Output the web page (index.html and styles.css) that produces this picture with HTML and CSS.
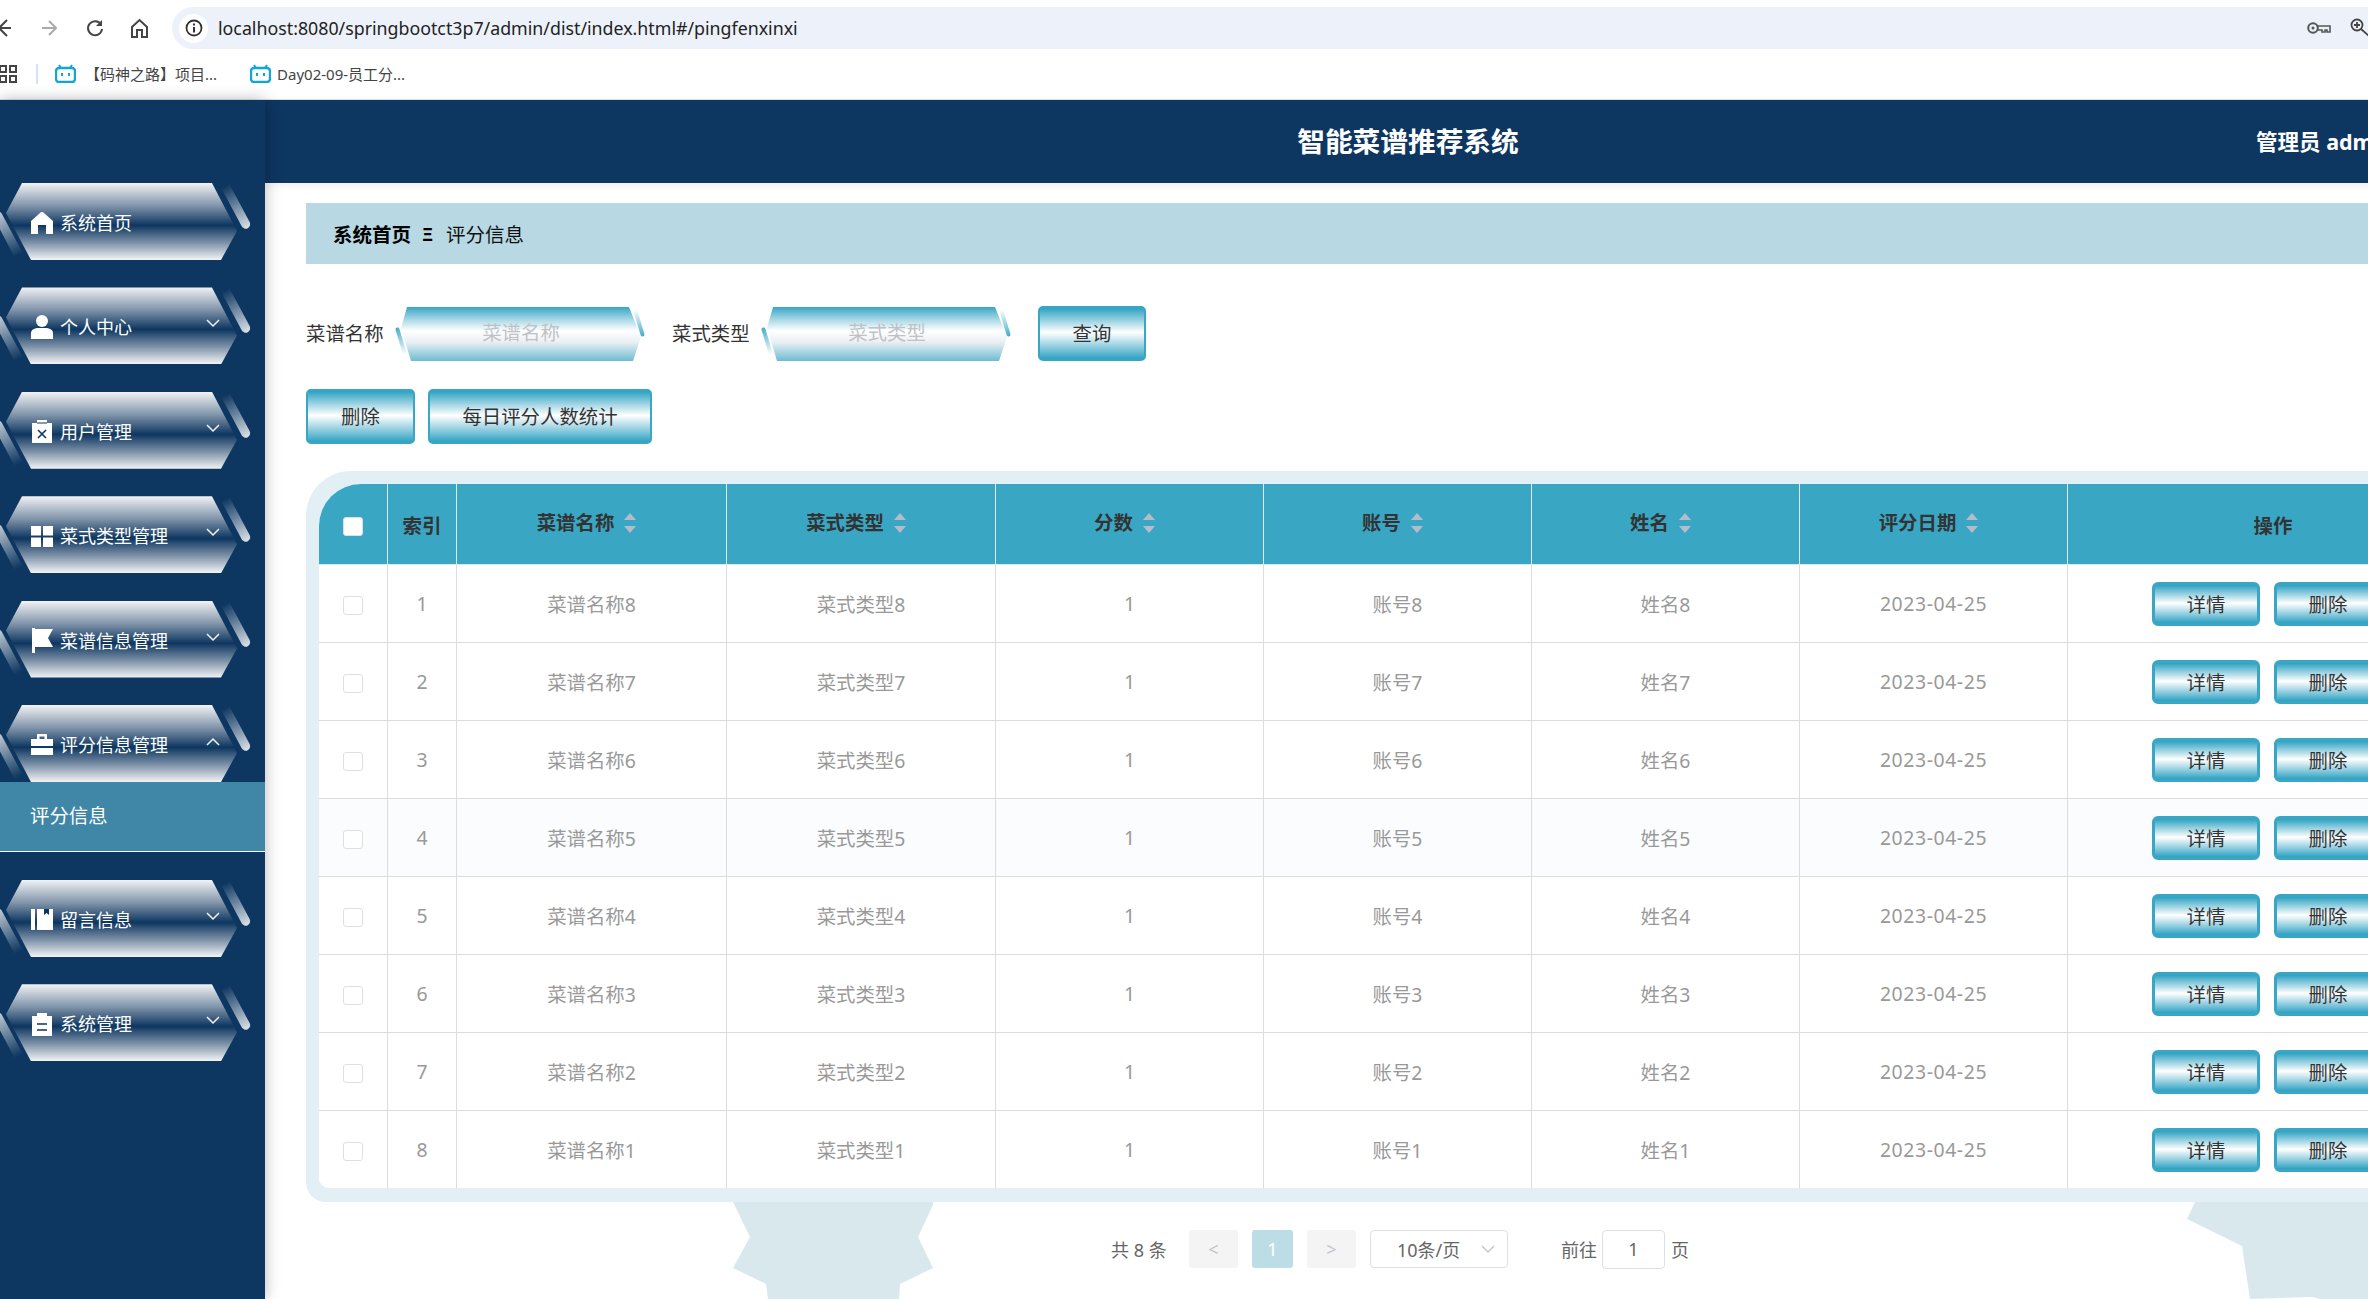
FILE: index.html
```html
<!DOCTYPE html>
<html>
<head>
  <meta charset="utf-8">
  <title>智能菜谱推荐系统</title>
  <link rel="stylesheet" href="styles.css">
</head>
<body>
  <header class="browser">
    <div class="toolbar">
      <svg class="tool-icon back" width="16" height="20" viewBox="0 0 16 20"><path d="M10 2 2 10l8 8M2 10h12" fill="none" stroke="#444" stroke-width="2"/></svg>
      <svg class="tool-icon forward" width="16" height="20" viewBox="0 0 16 20"><path d="M8 3l7 7-7 7M15 10H1" fill="none" stroke="#aaa" stroke-width="2"/></svg>
      <svg class="tool-icon reload" width="18" height="20" viewBox="0 0 18 20"><path d="M15 6.500A7 7 0 1 0 16 11" fill="none" stroke="#444" stroke-width="2"/><path d="M16 2v6h-6z" fill="#444"/></svg>
      <svg class="tool-icon home" width="17" height="20" viewBox="0 0 17 20"><path d="M1 9l7.500-7L16 9v10h-5v-7H6v7H1z" fill="none" stroke="#444" stroke-width="2"/></svg>
      <div class="address">
        <span class="site-info"><svg width="18" height="18" viewBox="0 0 18 18"><circle cx="9" cy="9" r="7.500" fill="none" stroke="#333" stroke-width="1.800"/><path d="M9 8v5.500M9 4.500v2" stroke="#333" stroke-width="2"/></svg></span>
        <span class="url">localhost:8080/springbootct3p7/admin/dist/index.html#/pingfenxinxi</span>
        <svg class="key" width="24" height="14" viewBox="0 0 24 14"><circle cx="6" cy="7" r="4.800" fill="none" stroke="#555" stroke-width="2"/><circle cx="6" cy="7" r="1.500" fill="#555"/><path d="M11 5h12v6h-3V9h-2v2h-3V9h-4" fill="none" stroke="#555" stroke-width="1.600"/></svg>
        <svg class="magnifier" width="20" height="20" viewBox="0 0 20 20"><circle cx="7" cy="7" r="5.500" fill="none" stroke="#444" stroke-width="1.800"/><path d="M11 11l8 7M4 7h6M7 4v6" fill="none" stroke="#444" stroke-width="1.800"/></svg>
      </div>
    </div>
    <div class="bookmarks">
      <svg class="apps" width="18" height="18" viewBox="0 0 18 18"><path d="M1 1h6v6H1zM11 1h6v6h-6zM1 11h6v6H1zM11 11h6v6h-6z" fill="none" stroke="#444" stroke-width="2"/></svg>
      <span class="bm-sep"></span>
      <a class="bookmark bm-first">
        <svg width="21" height="19" viewBox="0 0 21 19"><path d="M6 4 4 1M15 4l2-3" stroke="#12a5d8" stroke-width="2"/><rect x="1" y="4" width="19" height="14" rx="3" fill="none" stroke="#12a5d8" stroke-width="2.400"/><path d="M7 9v3M14 9v3" stroke="#12a5d8" stroke-width="2"/></svg>
        <span>【码神之路】项目...</span>
      </a>
      <a class="bookmark bm-second">
        <svg width="21" height="19" viewBox="0 0 21 19"><path d="M6 4 4 1M15 4l2-3" stroke="#12a5d8" stroke-width="2"/><rect x="1" y="4" width="19" height="14" rx="3" fill="none" stroke="#12a5d8" stroke-width="2.400"/><path d="M7 9v3M14 9v3" stroke="#12a5d8" stroke-width="2"/></svg>
        <span>Day02-09-员工分...</span>
      </a>
    </div>
  </header>

  <svg class="decor" width="2368" height="97" viewBox="0 1202 2368 97">
    <polygon points="733,1202 933,1202 933,1205 918,1237 933,1268 900,1284 899,1299 768,1299 766,1284 733,1268 750,1237"/>
    <polygon points="2195,1202 2368,1202 2368,1299 2320,1299 2313,1297 2250,1299 2242,1246 2187,1219"/>
  </svg>

  <div class="app">
    <aside class="sidebar">
      <div class="menu-item">
        <span class="hex"></span><span class="slash-left"></span><span class="slash-right"></span>
        <svg class="menu-icon" width="22" height="22" viewBox="0 0 22 22"><path d="M11 0q1 0 2 1l9 8v13h-7v-9H7v9H0V9l9-8q1-1 2-1z" fill="#fff"/></svg>
        <span class="menu-text">系统首页</span>
      </div>
      <div class="menu-item">
        <span class="hex"></span><span class="slash-left"></span><span class="slash-right"></span>
        <svg class="menu-icon" width="22" height="24" viewBox="0 0 22 24"><circle cx="11" cy="6" r="6" fill="#fff"/><path d="M0 24v-6q0-4 6-5h10q6 1 6 5v6z" fill="#fff"/></svg>
        <span class="menu-text">个人中心</span>
        <svg class="chevron" width="14" height="9" viewBox="0 0 14 9"><path d="M1 1l6 6 6-6" fill="none" stroke="#f0f2f6" stroke-width="1.500"/></svg>
      </div>
      <div class="menu-item">
        <span class="hex"></span><span class="slash-left"></span><span class="slash-right"></span>
        <svg class="menu-icon" width="22" height="23" viewBox="0 0 22 23"><path d="M1 3h5V0h10v3h5v20H1z" fill="#fff"/><path d="M6 3h10" stroke="#0d3660" stroke-width="1"/><path d="M7 10l8 8M15 10l-8 8" stroke="#0d3660" stroke-width="1.600"/></svg>
        <span class="menu-text">用户管理</span>
        <svg class="chevron" width="14" height="9" viewBox="0 0 14 9"><path d="M1 1l6 6 6-6" fill="none" stroke="#f0f2f6" stroke-width="1.500"/></svg>
      </div>
      <div class="menu-item">
        <span class="hex"></span><span class="slash-left"></span><span class="slash-right"></span>
        <svg class="menu-icon" width="22" height="21" viewBox="0 0 22 21"><path d="M0 0h10v9.500H0zM12 0h10v9.500H12zM0 11.500h10V21H0zM12 11.500h10V21H12z" fill="#fff"/></svg>
        <span class="menu-text">菜式类型管理</span>
        <svg class="chevron" width="14" height="9" viewBox="0 0 14 9"><path d="M1 1l6 6 6-6" fill="none" stroke="#f0f2f6" stroke-width="1.500"/></svg>
      </div>
      <div class="menu-item">
        <span class="hex"></span><span class="slash-left"></span><span class="slash-right"></span>
        <svg class="menu-icon" width="22" height="25" viewBox="0 0 22 25"><path d="M1 0h3v25H1zM4 1h18l-5 9 5 9H4z" fill="#fff"/></svg>
        <span class="menu-text">菜谱信息管理</span>
        <svg class="chevron" width="14" height="9" viewBox="0 0 14 9"><path d="M1 1l6 6 6-6" fill="none" stroke="#f0f2f6" stroke-width="1.500"/></svg>
      </div>
      <div class="menu-item">
        <span class="hex"></span><span class="slash-left"></span><span class="slash-right"></span>
        <svg class="menu-icon" width="22" height="21" viewBox="0 0 22 21"><path d="M6 5V0h10v5h6v7H0V5zM8.500 5h5V2.500h-5zM0 14h22v7H0z" fill="#fff" fill-rule="evenodd"/></svg>
        <span class="menu-text">评分信息管理</span>
        <svg class="chevron" width="14" height="9" viewBox="0 0 14 9"><path d="M1 8l6-6 6 6" fill="none" stroke="#f0f2f6" stroke-width="1.500"/></svg>
      </div>
      <div class="sub-item">评分信息</div>
      <div class="menu-item">
        <span class="hex"></span><span class="slash-left"></span><span class="slash-right"></span>
        <svg class="menu-icon" width="22" height="21" viewBox="0 0 22 21"><path d="M0 0h4v21H0zM6 0h16v21H6z" fill="#fff"/><path d="M13 0h5v6l-2.500-2L13 6z" fill="#0d3660"/></svg>
        <span class="menu-text">留言信息</span>
        <svg class="chevron" width="14" height="9" viewBox="0 0 14 9"><path d="M1 1l6 6 6-6" fill="none" stroke="#f0f2f6" stroke-width="1.500"/></svg>
      </div>
      <div class="menu-item">
        <span class="hex"></span><span class="slash-left"></span><span class="slash-right"></span>
        <svg class="menu-icon" width="22" height="23" viewBox="0 0 22 23"><path d="M1 3h5V0h10v3h5v20H1z" fill="#fff"/><path d="M6 11h10M6 17h10" stroke="#0d3660" stroke-width="1.600"/></svg>
        <span class="menu-text">系统管理</span>
        <svg class="chevron" width="14" height="9" viewBox="0 0 14 9"><path d="M1 1l6 6 6-6" fill="none" stroke="#f0f2f6" stroke-width="1.500"/></svg>
      </div>
    </aside>

    <div class="main">
      <div class="topbar">
        <span></span>
        <h1 class="topbar-title">智能菜谱推荐系统</h1>
        <span class="topbar-user">管理员 admin</span>
      </div>

      <div class="content">
        <div class="breadcrumb">
          <b>系统首页</b><span class="crumb-sep">Ξ</span><span>评分信息</span>
        </div>

        <div class="search-row">
          <label class="search-label">菜谱名称</label>
          <div class="hex-input">
            <input type="text" placeholder="菜谱名称">
            <span class="input-slash-left"></span><span class="input-slash-right"></span>
          </div>
          <label class="search-label">菜式类型</label>
          <div class="hex-input">
            <input type="text" placeholder="菜式类型">
            <span class="input-slash-left"></span><span class="input-slash-right"></span>
          </div>
          <button class="btn btn-query">查询</button>
        </div>

        <div class="action-row">
          <button class="btn btn-del">删除</button>
          <button class="btn btn-stat">每日评分人数统计</button>
        </div>

        <div class="table-wrap">
          <div class="table-clip">
            <table class="data-table">
              <colgroup>
                <col class="col-check"><col class="col-index">
                <col class="col-270"><col class="col-269"><col class="col-268"><col class="col-268"><col class="col-268"><col class="col-268">
                <col class="col-ops">
              </colgroup>
              <thead>
                <tr>
                  <th class="th-low"><span class="check check-head"></span></th>
                  <th class="th-low">索引</th>
                  <th>菜谱名称<span class="sort"></span></th>
                  <th>菜式类型<span class="sort"></span></th>
                  <th>分数<span class="sort"></span></th>
                  <th>账号<span class="sort"></span></th>
                  <th>姓名<span class="sort"></span></th>
                  <th>评分日期<span class="sort"></span></th>
                  <th class="th-low">操作</th>
                </tr>
              </thead>
              <tbody>
                <tr>
                  <td><span class="check"></span></td><td>1</td><td>菜谱名称8</td><td>菜式类型8</td><td>1</td><td>账号8</td><td>姓名8</td><td class="date">2023-04-25</td>
                  <td><div class="ops"><button class="btn btn-row">详情</button><button class="btn btn-row">删除</button></div></td>
                </tr>
                <tr>
                  <td><span class="check"></span></td><td>2</td><td>菜谱名称7</td><td>菜式类型7</td><td>1</td><td>账号7</td><td>姓名7</td><td class="date">2023-04-25</td>
                  <td><div class="ops"><button class="btn btn-row">详情</button><button class="btn btn-row">删除</button></div></td>
                </tr>
                <tr>
                  <td><span class="check"></span></td><td>3</td><td>菜谱名称6</td><td>菜式类型6</td><td>1</td><td>账号6</td><td>姓名6</td><td class="date">2023-04-25</td>
                  <td><div class="ops"><button class="btn btn-row">详情</button><button class="btn btn-row">删除</button></div></td>
                </tr>
                <tr class="row-hover">
                  <td><span class="check"></span></td><td>4</td><td>菜谱名称5</td><td>菜式类型5</td><td>1</td><td>账号5</td><td>姓名5</td><td class="date">2023-04-25</td>
                  <td><div class="ops"><button class="btn btn-row">详情</button><button class="btn btn-row">删除</button></div></td>
                </tr>
                <tr>
                  <td><span class="check"></span></td><td>5</td><td>菜谱名称4</td><td>菜式类型4</td><td>1</td><td>账号4</td><td>姓名4</td><td class="date">2023-04-25</td>
                  <td><div class="ops"><button class="btn btn-row">详情</button><button class="btn btn-row">删除</button></div></td>
                </tr>
                <tr>
                  <td><span class="check"></span></td><td>6</td><td>菜谱名称3</td><td>菜式类型3</td><td>1</td><td>账号3</td><td>姓名3</td><td class="date">2023-04-25</td>
                  <td><div class="ops"><button class="btn btn-row">详情</button><button class="btn btn-row">删除</button></div></td>
                </tr>
                <tr>
                  <td><span class="check"></span></td><td>7</td><td>菜谱名称2</td><td>菜式类型2</td><td>1</td><td>账号2</td><td>姓名2</td><td class="date">2023-04-25</td>
                  <td><div class="ops"><button class="btn btn-row">详情</button><button class="btn btn-row">删除</button></div></td>
                </tr>
                <tr class="row-last">
                  <td><span class="check"></span></td><td>8</td><td>菜谱名称1</td><td>菜式类型1</td><td>1</td><td>账号1</td><td>姓名1</td><td class="date">2023-04-25</td>
                  <td><div class="ops"><button class="btn btn-row">详情</button><button class="btn btn-row">删除</button></div></td>
                </tr>
              </tbody>
            </table>
          </div>
        </div>

        <div class="pagination">
          <span class="page-total">共 8 条</span>
          <span class="page-btn page-prev">&lt;</span>
          <span class="page-btn page-now">1</span>
          <span class="page-btn page-next">&gt;</span>
          <span class="page-size">10条/页
            <svg width="14" height="8" viewBox="0 0 14 8"><path d="M1 1l6 6 6-6" fill="none" stroke="#c0c4cc" stroke-width="1.300"/></svg>
          </span>
          <span class="page-goto">前往</span>
          <span class="page-input">1</span>
          <span class="page-unit">页</span>
        </div>
      </div>
    </div>
  </div>
</body>
</html>
```

FILE: styles.css
```css
* {
  margin: 0;
  padding: 0;
  box-sizing: border-box;
  font-family: "Noto Sans", "Noto Sans CJK SC", sans-serif;
}

html, body {
  width: 2368px;
  height: 1299px;
  overflow: hidden;
  background: #fff;
}

body {
  position: relative;
}

/* browser chrome */
.browser {
  height: 100px;
  background: #fff;
  border-bottom: 1px solid #dfe1e5;
  overflow: hidden;
}

.toolbar {
  height: 56px;
  display: flex;
  align-items: center;
}

.tool-icon {
  flex: none;
}

.back { margin-left: -3px; }
.forward { margin-left: 28px; }
.reload { margin-left: 29px; }
.home { margin-left: 27px; }

.address {
  flex: 1;
  height: 42px;
  margin-left: 24px;
  margin-right: -40px;
  background: #edf2fa;
  border-radius: 21px;
  display: flex;
  align-items: center;
  padding-left: 7px;
  padding-right: 40px;
}

.site-info {
  width: 29px;
  height: 29px;
  border-radius: 50%;
  background: #fff;
  display: flex;
  align-items: center;
  justify-content: center;
}

.url {
  margin-left: 10px;
  font-size: 17.800px;
  color: #222;
  flex: 1;
}

.key { margin-right: 19px; }
.magnifier { margin-right: -2px; }

.bookmarks {
  height: 43px;
  display: flex;
  align-items: center;
  padding-bottom: 8px;
  font-size: 15px;
  color: #444;
}

.apps { margin-left: -1px; }

.bm-sep {
  width: 2px;
  height: 20px;
  margin-left: 19px;
  background: #d3e3fd;
}

.bookmark {
  display: flex;
  align-items: center;
  gap: 9px;
}

.bm-first { margin-left: 17px; }

.bm-second {
  margin-left: 33px;
  gap: 6px;
}

/* page */
.decor {
  position: absolute;
  left: 0;
  top: 1202px;
}

.decor polygon {
  fill: #d9e8ed;
}

.app {
  position: relative;
  display: flex;
  height: 1199px;
}

.sidebar {
  flex: none;
  position: relative;
  z-index: 2;
  width: 265px;
  padding-top: 83px;
  background: #0d3660;
  box-shadow: 0 0 14px rgba(0, 0, 0, .28);
}

.menu-item {
  position: relative;
  height: 77px;
  margin-bottom: 27.4px;
  display: flex;
  align-items: center;
  padding: 3px 0 0 31px;
  color: #fff;
  font-size: 18px;
}

.hex {
  position: absolute;
  inset: 0;
  background: linear-gradient(180deg, #f2f3f5 0%, #7f93a9 30%, #0d3660 55%, #7f93a9 78%, #f3f4f6 100%);
  clip-path: polygon(22px 0, 212px 0, 237px 48px, 221px 77px, 31px 77px, 6px 30px);
}

.slash-left,
.slash-right {
  position: absolute;
  width: 9px;
  height: 48px;
  transform: rotate(-28deg);
}

.slash-left {
  left: 3px;
  top: 27px;
  background: linear-gradient(180deg, rgba(255, 255, 255, .75), rgba(255, 255, 255, 0));
  border-radius: 4px 4px 0 0;
}

.slash-right {
  left: 232px;
  top: 0;
  background: linear-gradient(180deg, rgba(255, 255, 255, 0), rgba(255, 255, 255, .85));
  border-radius: 0 0 5px 5px;
}

.menu-icon {
  position: relative;
  flex: none;
}

.menu-text {
  position: relative;
  margin-left: 7px;
  line-height: 22px;
}

.chevron {
  position: absolute;
  left: 206px;
  top: 32px;
}

.sub-item {
  height: 70px;
  margin-top: -27.4px;
  margin-bottom: 28px;
  padding-left: 30px;
  line-height: 68px;
  background: #4086a6;
  border-bottom: 1.500px solid #fff;
  color: #fff;
  font-size: 19.400px;
}

.main {
  flex: none;
  width: 2286px;
}

.topbar {
  height: 83px;
  padding-bottom: 3px;
  display: grid;
  grid-template-columns: 1fr auto 1fr;
  align-items: center;
  background: #0d3660;
  color: #fff;
  box-shadow: 0 2px 8px rgba(13, 54, 96, .08);
}

.topbar-title {
  font-size: 27.700px;
  font-weight: 700;
}

.topbar-user {
  justify-self: end;
  padding-right: 157px;
  font-size: 21.500px;
  font-weight: 700;
}

.content {
  padding: 20px 0 0 41px;
}

.breadcrumb {
  height: 61px;
  display: flex;
  align-items: center;
  padding-left: 27px;
  background: #b8d8e3;
  font-size: 19.500px;
  color: #111;
}

.breadcrumb b {
  font-weight: 700;
  color: #000;
}

.crumb-sep {
  width: 12px;
  margin: 0 12px 0 11px;
  font-size: 18px;
  font-weight: 700;
  color: #000;
}

.search-row {
  margin-top: 42px;
  display: flex;
  align-items: center;
  height: 55px;
}

.search-label {
  width: 78px;
  margin-right: 14px;
  padding-bottom: 2px;
  font-size: 19.400px;
  color: #333;
  white-space: nowrap;
}

.hex-input {
  position: relative;
  width: 246px;
  height: 55px;
  margin-right: 28px;
}

.hex-input input {
  display: block;
  width: 100%;
  height: 100%;
  border: 0;
  outline: none;
  padding-bottom: 2px;
  text-align: center;
  font-size: 19.400px;
  background: linear-gradient(180deg, #2ea2c3 0%, #a6d6e4 24%, #fff 45%, #e9eff3 66%, #6dbcd3 100%);
  clip-path: polygon(9px 1px, 231px 1px, 243px 31px, 235px 55px, 13px 55px, 3px 22px);
}

.hex-input input::placeholder {
  color: #c0c1c5;
  opacity: 1;
}

.input-slash-left,
.input-slash-right {
  position: absolute;
  width: 4px;
  height: 28px;
  transform: rotate(-17deg);
}

.input-slash-left {
  left: 1px;
  top: 21px;
  background: linear-gradient(180deg, #45abc8, rgba(69, 171, 200, 0));
  border-radius: 2px 2px 0 0;
}

.input-slash-right {
  left: 239px;
  top: 3px;
  background: linear-gradient(180deg, rgba(69, 171, 200, 0), #45abc8);
  border-radius: 0 0 2px 2px;
}

.btn {
  height: 55px;
  padding-bottom: 2px;
  border: 2px solid #39a6c4;
  border-radius: 5px;
  background: linear-gradient(180deg, #2ea2c3 0%, #a9d8e6 28%, #fff 48%, #a9d8e6 70%, #2ea2c3 100%);
  font-size: 19.400px;
  color: #333;
}

.btn-query {
  width: 108px;
}

.action-row {
  margin-top: 28px;
  display: flex;
  gap: 13px;
}

.btn-del { width: 109px; }
.btn-stat { width: 224px; }

.table-wrap {
  margin-top: 27px;
  width: 2186px;
  height: 731px;
  padding: 13px 0 14px 13px;
  background: #e2eff4;
  border-radius: 45px 0 0 20px;
}

.table-clip {
  height: 704px;
  overflow: hidden;
  border-radius: 42px 0 0 10px;
  background: #fff;
}

.data-table {
  width: 2160px;
  table-layout: fixed;
  border-collapse: separate;
  border-spacing: 0;
}

.col-check { width: 69px; }
.col-index { width: 69px; }
.col-270 { width: 270px; }
.col-269 { width: 269px; }
.col-268 { width: 268px; }
.col-ops { width: 411px; }

.data-table th,
.data-table td {
  text-align: center;
  border-right: 1px solid #dcdcdc;
  font-size: 19.400px;
}

.data-table th {
  height: 81px;
  padding-bottom: 5px;
  background: #39a6c4;
  color: #333;
  font-weight: 700;
  border-right-color: #dfe9ec;
  border-bottom: 1px solid #dfe9ec;
}

.data-table th.th-low {
  padding-bottom: 0;
}

.data-table td {
  height: 78px;
  color: #999;
  background: #fff;
  border-bottom: 1px solid #dcdcdc;
}

.row-hover td {
  background: #fafcfe;
}

.data-table .row-last td {
  height: 77px;
  border-bottom: 0;
}

.date {
  letter-spacing: .6px;
}

.check {
  display: inline-block;
  width: 20px;
  height: 19px;
  vertical-align: middle;
  border: 1px solid #dcdfe6;
  border-radius: 3px;
  background: #fff;
}

.sort {
  display: inline-block;
  position: relative;
  width: 12px;
  height: 20px;
  margin-left: 10px;
  margin-right: 10px;
  vertical-align: -3px;
}

.sort::before,
.sort::after {
  content: "";
  position: absolute;
  left: 0;
  border-left: 6px solid transparent;
  border-right: 6px solid transparent;
}

.sort::before {
  top: 0;
  border-bottom: 7px solid #b4bccc;
}

.sort::after {
  bottom: 0;
  border-top: 7px solid #b4bccc;
}

.ops {
  display: flex;
  gap: 14px;
  padding-left: 84px;
}

.btn-row {
  flex: none;
  width: 108px;
  height: 44px;
  padding-bottom: 0;
  border-width: 3px;
  border-radius: 6px;
}

.pagination {
  margin-top: 28px;
  height: 38px;
  padding-left: 805px;
  display: flex;
  align-items: center;
  font-size: 18px;
  color: #666;
}

.page-total {
  width: 58px;
  margin-right: 20px;
  white-space: nowrap;
}

.page-btn {
  height: 38px;
  margin-right: 14px;
  display: flex;
  align-items: center;
  justify-content: center;
  border-radius: 3px;
  background: #f4f4f5;
  color: #c0c4cc;
}

.page-prev, .page-next { width: 49px; }

.page-now {
  width: 41px;
  background: #bcdde6;
  color: #fff;
}

.page-size {
  width: 138px;
  height: 38px;
  padding: 0 12px 0 26px;
  display: flex;
  align-items: center;
  justify-content: space-between;
  border: 1px solid #dcdfe6;
  border-radius: 4px;
  white-space: nowrap;
}

.page-goto {
  margin-left: 53px;
  margin-right: 5px;
}

.page-input {
  width: 63px;
  height: 39px;
  display: flex;
  align-items: center;
  justify-content: center;
  border: 1px solid #dcdfe6;
  border-radius: 4px;
}

.page-unit {
  margin-left: 6px;
}
```
